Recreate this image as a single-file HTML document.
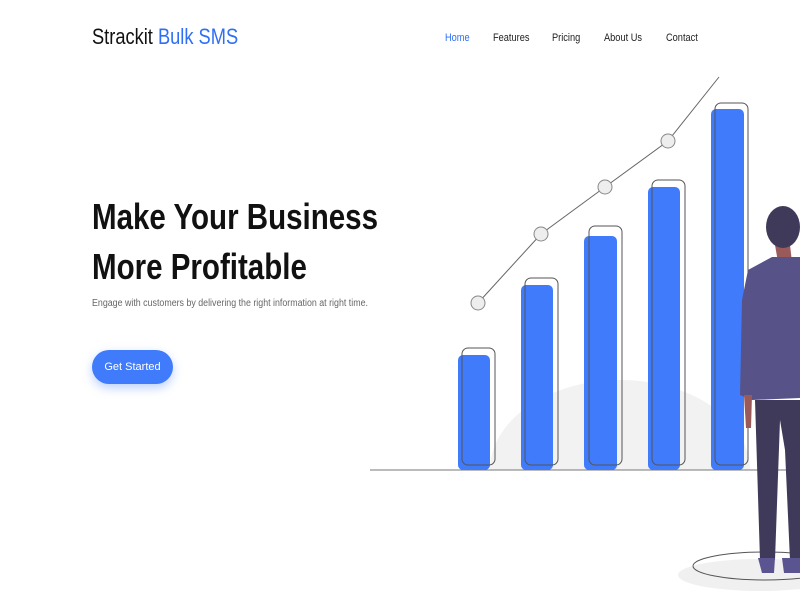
<!DOCTYPE html>
<html><head><meta charset="utf-8"><style>
*{margin:0;padding:0;box-sizing:border-box}
body{width:800px;height:600px;overflow:hidden;background:#fff;font-family:"Liberation Sans",sans-serif;position:relative}
.logo{position:absolute;left:92px;top:24px;font-size:22px;color:#111;transform:scaleX(0.83);transform-origin:left;white-space:nowrap}
.logo span{color:#2f6ff5}
nav{position:absolute;top:32px;font-size:11px;color:#222}
nav a{position:absolute;white-space:nowrap;color:#222;text-decoration:none;transform:scaleX(0.84);transform-origin:left}
h1{position:absolute;left:92px;top:192px;font-size:36px;line-height:50px;font-weight:bold;color:#111;white-space:nowrap;transform:scaleX(0.82);transform-origin:left}
p{position:absolute;left:92px;top:298px;font-size:10px;color:#666;white-space:nowrap;transform:scaleX(0.885);transform-origin:left}
.btn{position:absolute;left:92px;top:350px;width:81px;height:34px;border-radius:17px;background:#3f7bfa;color:#fff;font-size:11px;text-align:center;line-height:34px;box-shadow:0 4px 10px rgba(63,123,250,.35)}
svg{position:absolute;left:0;top:0}
</style></head><body>
<svg width="800" height="600">
<ellipse cx="620" cy="470" rx="130" ry="90" fill="#f2f2f2"/>
<rect x="360" y="470" width="440" height="130" fill="#fff"/>
<line x1="370" y1="470" x2="800" y2="470" stroke="#777" stroke-width="1"/>
<polyline points="478,303 541,234 605,187 668,141 719,77" fill="none" stroke="#666" stroke-width="1"/>
<g fill="#eee" stroke="#888" stroke-width="1"><circle cx="478" cy="303" r="7"/><circle cx="541" cy="234" r="7"/><circle cx="605" cy="187" r="7"/><circle cx="668" cy="141" r="7"/></g>
<g fill="#3f7bfa"><rect x="458" y="355" width="32" height="115" rx="5"/><rect x="521" y="285" width="32" height="185" rx="5"/><rect x="584" y="236" width="33" height="234" rx="5"/><rect x="648" y="187" width="32" height="283" rx="5"/><rect x="711" y="109" width="33" height="361" rx="5"/></g>
<g fill="none" stroke="#555" stroke-width="1"><rect x="462" y="348" width="33" height="117" rx="6"/><rect x="525" y="278" width="33" height="187" rx="6"/><rect x="589" y="226" width="33" height="239" rx="6"/><rect x="652" y="180" width="33" height="285" rx="6"/><rect x="715" y="103" width="33" height="362" rx="6"/></g>
<ellipse cx="760" cy="575" rx="82" ry="16" fill="#f0f0f0"/>
<ellipse cx="765" cy="566" rx="72" ry="14" fill="none" stroke="#555"/>
<path d="M755 400 L800 400 L800 560 L790 560 L785 450 L780 420 L775 560 L760 560 Z" fill="#3f3a5a"/>
<path d="M758 558 L775 558 L774 573 L762 573 Z M782 558 L800 558 L800 573 L784 573 Z" fill="#5a5590"/>
<path d="M775 245 L790 245 L792 262 L778 262 Z" fill="#9b5a5a"/>
<path d="M748 270 L772 257 L800 257 L800 398 L752 400 L740 395 L742 300 Z" fill="#575389"/>
<path d="M744 395 L752 395 L751 428 L746 428 Z" fill="#9b5a5a"/>
<ellipse cx="783" cy="227" rx="17" ry="21" fill="#3f3a5a"/>
</svg>
<div class="logo">Strackit <span>Bulk SMS</span></div>
<nav><a style="left:445px;color:#2f6ff5">Home</a><a style="left:493px">Features</a><a style="left:552px">Pricing</a><a style="left:604px">About Us</a><a style="left:666px">Contact</a></nav>
<h1>Make Your Business<br>More Profitable</h1>
<p>Engage with customers by delivering the right information at right time.</p>
<div class="btn">Get Started</div>
</body></html>
